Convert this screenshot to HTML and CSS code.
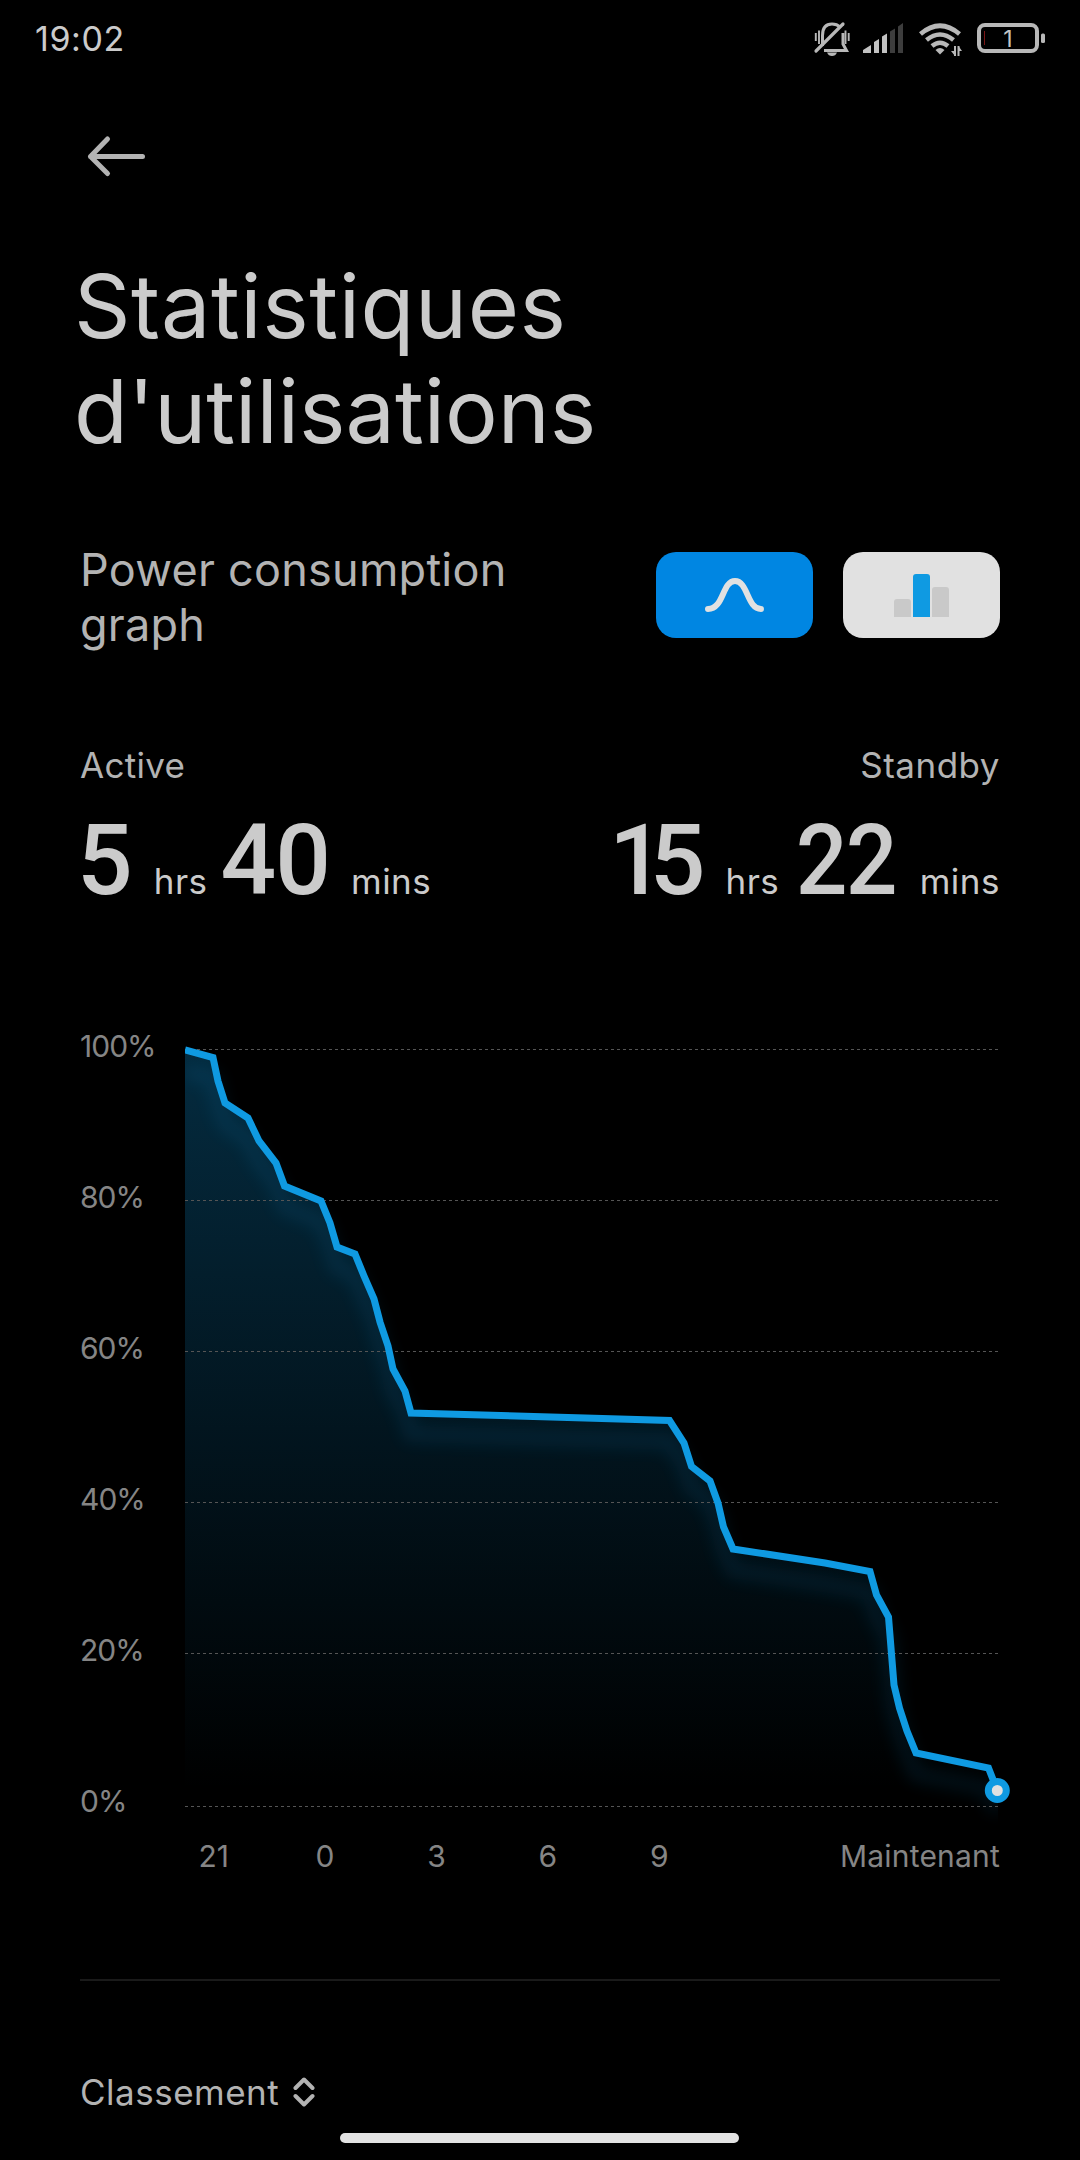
FILE: index.html
```html
<!DOCTYPE html>
<html lang="fr">
<head>
    <meta charset="UTF-8">
    <meta name="viewport" content="width=device-width, initial-scale=1.0">
    <title>Statistiques d'utilisations</title>
    <link rel="stylesheet" href="styles.css">
</head>
<body>
    <div class="status-bar">
        <span class="clock">19:02</span>
        <svg class="status-icons" viewBox="0 0 240 40" fill="none">
            <!-- muted bell -->
            <g stroke="#b8b8b8" stroke-width="3">
                <path d="M12.500 26V15.500Q12.500 4 22 4Q27 4 30 7M33 13V24L36.500 30.500H14" />
                <path d="M6 31L33 4" stroke-linecap="round" stroke-width="3.200" />
                <path d="M5.800 13V21M9 10.500V24M35.500 10.500V24M38.700 13V21" stroke-width="1.900" />
            </g>
            <path d="M17 32.500h10q-1.500 3.500-5 3.500t-5-3.500z" fill="#b8b8b8" />
            <!-- signal -->
            <path d="M53 33v-3l8-5v8zM64 33V22l5-3v14zM72 33V16.500l5-3V33z" fill="#c2c2c2" />
            <path d="M80 33V11.500l5-3V33zM88 33V6.500l5-3.500v30z" fill="#3d3d3d" />
            <!-- wifi -->
            <g stroke="#b8b8b8" stroke-width="4.600">
                <path d="M110.500 14Q130 -2.500 149.500 14" />
                <path d="M116.500 20Q130 9 143.500 20" />
                <path d="M122 26Q130 19.500 138 26" />
            </g>
            <path d="M125.500 30q4.500-4 9 0l-4.500 4.500z" fill="#b8b8b8" />
            <path d="M145 26v10M148.500 36V26" stroke="#b8b8b8" stroke-width="2" />
            <path d="M141 31h4v5zM152 31h-3.500v-5z" fill="#b8b8b8" />
            <!-- battery -->
            <rect x="169" y="5" width="58" height="26" rx="6" stroke="#b8b8b8" stroke-width="4" />
            <rect x="231" y="13.500" width="4" height="9.500" rx="1.500" fill="#b8b8b8" />
            <path d="M174.500 11v14" stroke="#7c1515" />
            <text class="battery-level" x="198" y="26.500">1</text>
        </svg>
    </div>

    <div class="page">
        <svg class="back" viewBox="0 0 64 44">
            <path d="M56.500 22.500H4.500M21.500 5L4.500 22.500L21.500 39.500" />
        </svg>

        <h1><span>Statistiques</span><br>d'utilisations</h1>

        <div class="graph-header">
            <div class="graph-title">Power consumption graph</div>
            <div class="toggle active">
                <svg viewBox="0 0 157 86">
                    <path d="M52 57C68 57 66 29 79 29S91 57 105 57" fill="none" stroke="#e1e1e1" stroke-width="6" stroke-linecap="round" />
                </svg>
            </div>
            <div class="toggle">
                <svg viewBox="0 0 157 86">
                    <path d="M51 65V50q0-3 3-3h11q3 0 3 3v15zM89 65V38q0-3 3-3h11q3 0 3 3v27z" fill="#c9c9c9" />
                    <path d="M70 65V25q0-3 3-3h11q3 0 3 3v40z" fill="#0f9ae2" />
                </svg>
            </div>
        </div>

        <div class="totals">
            <div class="total">
                <div class="label">Active</div>
                <div class="time"><b class="first">5</b><span>hrs</span><b>40</b><span>mins</span></div>
            </div>
            <div class="total right">
                <div class="label">Standby</div>
                <div class="time"><b class="tight">15</b><span>hrs</span><b class="narrow">22</b><span>mins</span></div>
            </div>
        </div>

        <div class="chart">
            <div class="y-axis">
                <span>100%</span>
                <span>80%</span>
                <span>60%</span>
                <span>40%</span>
                <span>20%</span>
                <span>0%</span>
            </div>
            <svg class="plot" viewBox="185 1030 829 800">
                <defs>
                    <linearGradient id="area" gradientUnits="userSpaceOnUse" x1="0" y1="1049" x2="0" y2="1790">
                        <stop offset="0" stop-color="#0f9ae2" stop-opacity="0.28" />
                        <stop offset="1" stop-color="#0f9ae2" stop-opacity="0" />
                    </linearGradient>
                    <filter id="blur" filterUnits="userSpaceOnUse" x="150" y="1000" width="900" height="860">
                        <feGaussianBlur stdDeviation="8" />
                    </filter>
                    <clipPath id="clip">
                        <rect x="185" y="1030" width="813" height="800" />
                    </clipPath>
                    <path id="line" d="M185 1050L213 1057.500L218 1081L225 1103L248 1118L259 1141L276 1163L284.500 1186L321 1201L330 1223L337 1247L355 1254L364 1276L374 1299L380 1322L388 1346L393 1369L405 1391L411 1413L669.500 1420.500L684 1443L691.500 1466.500L710 1481L718 1503L723.500 1527L733 1549L825 1563L870 1571.500L876.500 1595L888.500 1617L894 1685L899.500 1708L907 1731L916 1753L988.500 1768L997.300 1790.500" />
                </defs>
                <path fill="url(#area)" d="M185 1050L213 1057.500L218 1081L225 1103L248 1118L259 1141L276 1163L284.500 1186L321 1201L330 1223L337 1247L355 1254L364 1276L374 1299L380 1322L388 1346L393 1369L405 1391L411 1413L669.500 1420.500L684 1443L691.500 1466.500L710 1481L718 1503L723.500 1527L733 1549L825 1563L870 1571.500L876.500 1595L888.500 1617L894 1685L899.500 1708L907 1731L916 1753L988.500 1768L997.300 1790.500V1806H185Z" />
                <g clip-path="url(#clip)">
                    <use class="glow" href="#line" y="21" filter="url(#blur)" />
                </g>
                <path class="grid" d="M185 1049.500H999M185 1200.500H999M185 1351.500H999M185 1502.500H999M185 1653.500H999M185 1806.500H999" />
                <use class="curve" href="#line" />
                <circle cx="997.300" cy="1790.500" r="9" fill="#e1e1e1" stroke="#0f9ae2" stroke-width="7" />
            </svg>
        </div>
        <div class="x-axis">
            <span>21</span>
            <span>0</span>
            <span>3</span>
            <span>6</span>
            <span>9</span>
            <span class="now">Maintenant</span>
        </div>

        <div class="ranking">
            Classement
            <svg viewBox="0 0 22 32">
                <path d="M2.500 12L11 3.500L19.500 12M2.500 20L11 28.500L19.500 20" />
            </svg>
        </div>
    </div>
    <div class="home-bar"></div>
</body>
</html>
```
FILE: styles.css
```css
* {
    box-sizing: border-box;
}
body {
    margin: 0;
    width: 1080px;
    height: 2160px;
    overflow: hidden;
    background-color: #000;
    color: #cbcbcb;
    font-family: Inter, Roboto, sans-serif;
    position: relative;
}
svg {
    display: block;
}
.status-bar {
    height: 77px;
    padding: 0 34px 0 35px;
    display: flex;
    justify-content: space-between;
    line-height: 77px;
}
.clock {
    font-size: 34px;
    letter-spacing: 0.6px;
}
.status-icons {
    width: 240px;
    height: 40px;
    margin: 20px -4px 0 0;
}
.battery-level {
    font-size: 23px;
    fill: #c4c4c4;
    text-anchor: middle;
}
.page {
    padding: 57px 80px 0;
}
.back {
    width: 64px;
    height: 44px;
    margin-left: 6px;
    fill: none;
    stroke: #b3b3b3;
    stroke-width: 5;
    stroke-linecap: round;
    stroke-linejoin: round;
}
h1 {
    margin: 76px 0 0 -6px;
    font-size: 88px;
    font-weight: 400;
    line-height: 105px;
}
h1 span {
    letter-spacing: 0.6px;
}
.graph-header {
    display: flex;
    gap: 30px;
    height: 110px;
    margin-top: 78px;
}
.graph-title {
    flex: 1;
    font-size: 45px;
    line-height: 55px;
    letter-spacing: 0.25px;
    color: #b3b3b3;
}
.toggle {
    width: 157px;
    height: 86px;
    margin-top: 10px;
    border-radius: 20px;
    background-color: #e1e1e1;
}
.toggle.active {
    background-color: #0086e2;
}
.totals {
    display: flex;
    justify-content: space-between;
    margin-top: 92px;
}
.label {
    font-size: 35px;
    line-height: 42px;
    letter-spacing: 0.3px;
    color: #b3b3b3;
}
.right .label {
    text-align: right;
    letter-spacing: 0.5px;
}
.time {
    display: flex;
    align-items: baseline;
    margin-top: 25px;
    height: 99px;
    line-height: 99px;
}
.time b {
    font-family: Roboto, sans-serif;
    font-size: 98px;
    font-weight: 500;
    letter-spacing: -1px;
}
.time .first {
    margin: 0 2px 0 -3px;
    letter-spacing: -2px;
}
.time .tight {
    letter-spacing: -15px;
    margin-right: 14px;
}
.time .narrow {
    letter-spacing: -2px;
    margin-right: -1px;
    transform: scaleX(0.93);
}
.time span {
    font-size: 35px;
    margin: 0 13px 0 21px;
    letter-spacing: 0.5px;
}
.time span:last-child {
    margin-right: 0;
}
.chart {
    display: flex;
    height: 800px;
    margin-top: 120px;
}
.y-axis {
    width: 105px;
    flex-shrink: 0;
    margin-top: -59px;
    display: flex;
    flex-direction: column;
    font-size: 30px;
    line-height: 151px;
    letter-spacing: -1px;
    color: #858585;
}
.plot {
    width: 829px;
    height: 800px;
    flex-shrink: 0;
}
.grid {
    stroke: #555;
    stroke-width: 1;
    stroke-dasharray: 3 3;
}
.curve {
    fill: none;
    stroke: #0f9ae2;
    stroke-width: 7;
}
.glow {
    fill: none;
    stroke: #0f9ae2;
    stroke-width: 16;
    opacity: 0.1;
}
.x-axis {
    display: flex;
    height: 149px;
    padding: 6px 0 0 78px;
    border-bottom: 2px solid #1a1a1a;
    margin-top: 2px;
    font-size: 30px;
    line-height: 36px;
    color: #858585;
}
.x-axis span {
    width: 111.400px;
    text-align: center;
}
.x-axis .now {
    flex: 1;
    text-align: right;
    letter-spacing: 0.2px;
}
.ranking {
    display: flex;
    align-items: center;
    gap: 14px;
    margin-top: 90px;
    font-size: 35px;
    line-height: 42px;
    letter-spacing: 0.5px;
    color: #b3b3b3;
}
.ranking svg {
    width: 22px;
    height: 32px;
    fill: none;
    stroke: #b3b3b3;
    stroke-width: 4;
    stroke-linecap: round;
    stroke-linejoin: round;
}
.home-bar {
    position: absolute;
    left: 340px;
    bottom: 17px;
    width: 399px;
    height: 10px;
    border-radius: 5px;
    background-color: #e3e3e3;
}
```
